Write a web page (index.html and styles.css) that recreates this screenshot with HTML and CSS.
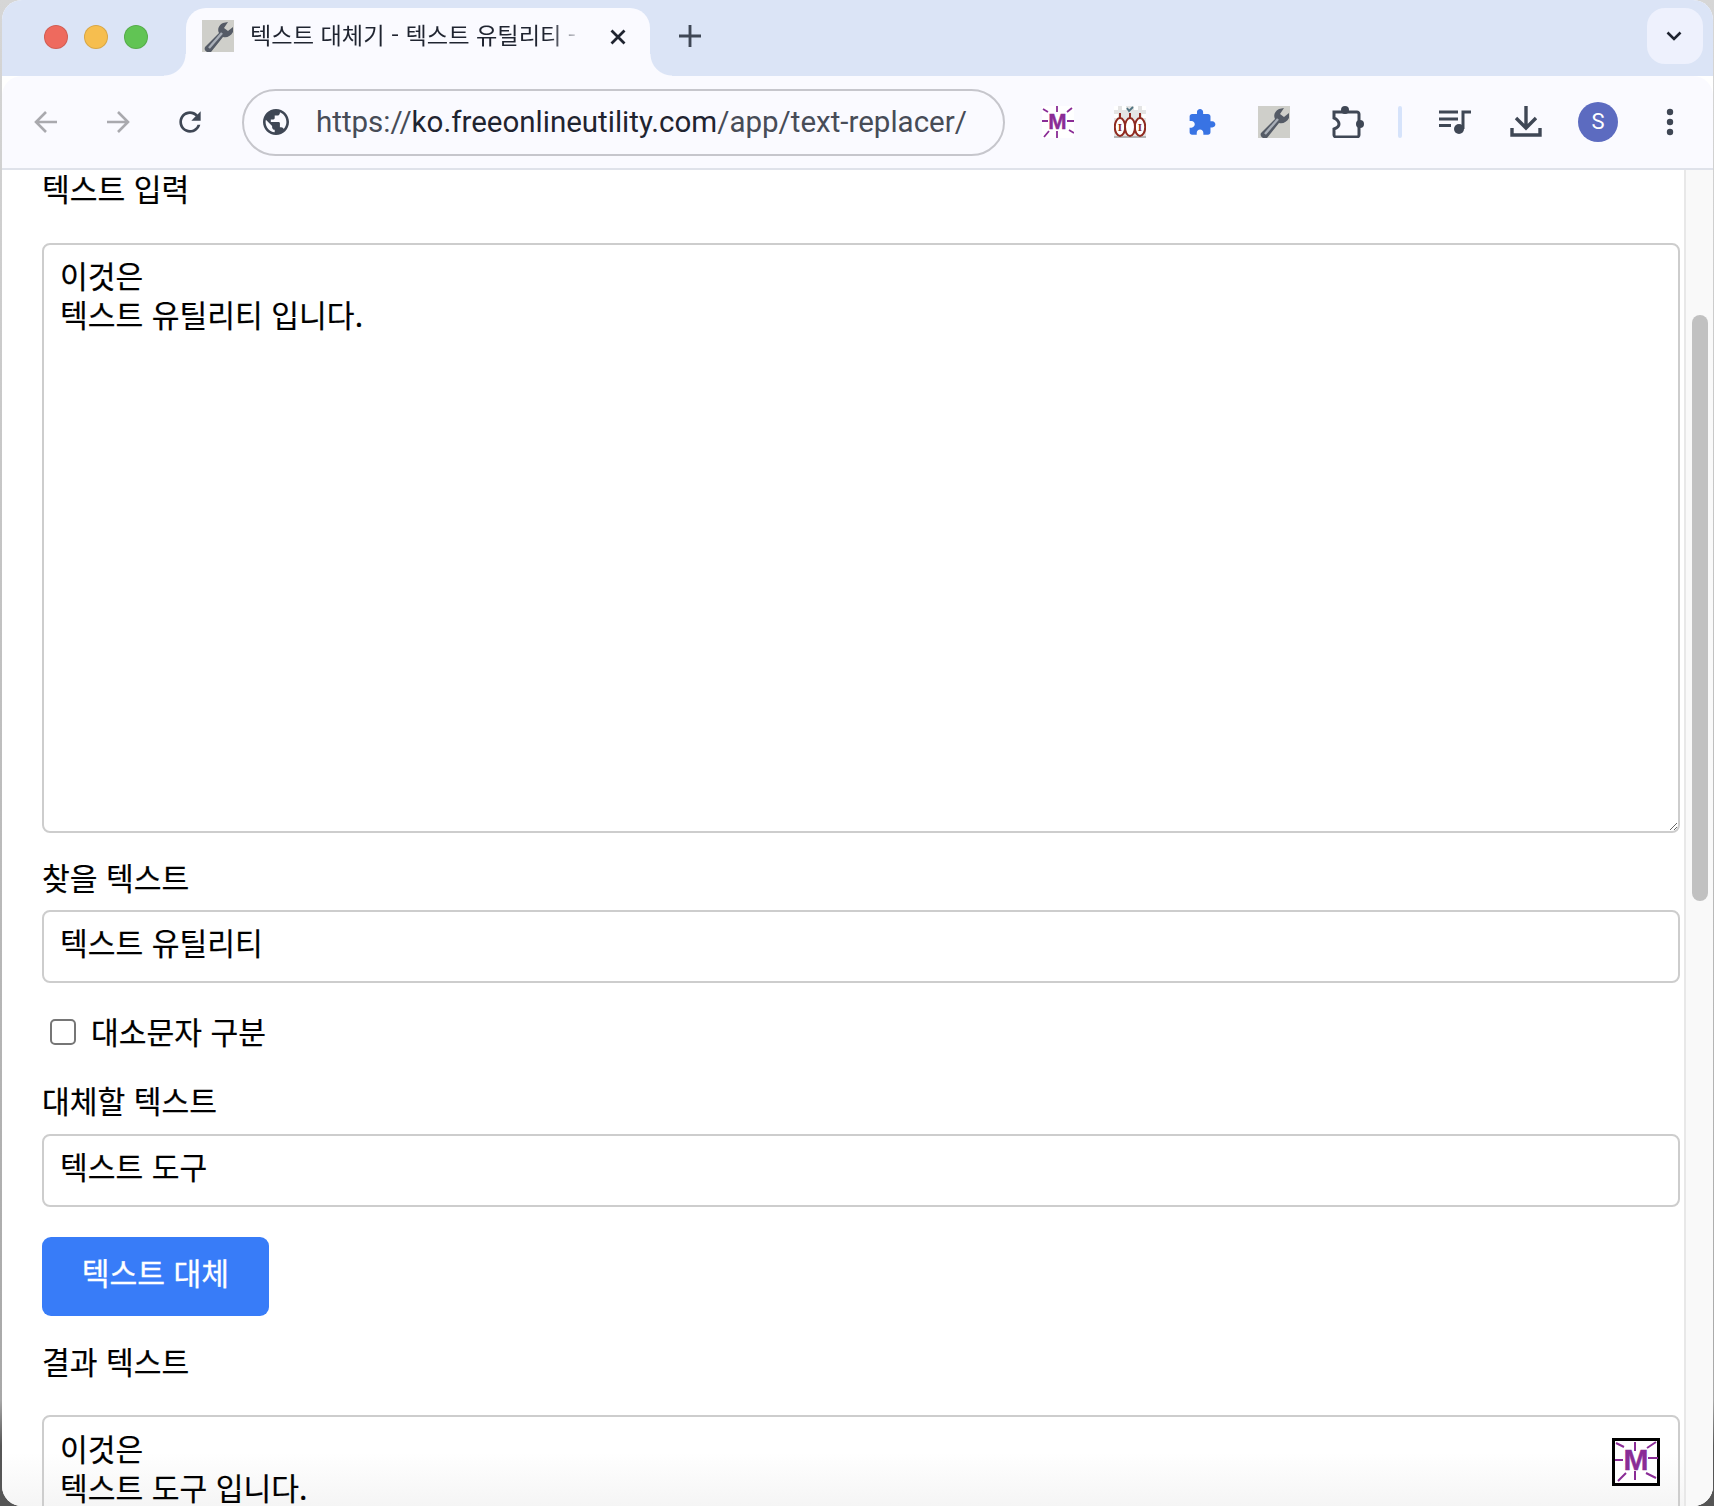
FILE: index.html
```html
<!DOCTYPE html>
<html lang="ko">
<head>
<meta charset="utf-8">
<title>텍스트 대체기</title>
<link rel="stylesheet" href="styles.css">
</head>
<body>
<div class="window">
  <header class="tabstrip">
    <div class="lights"><span class="light red"></span><span class="light amber"></span><span class="light green"></span></div>
    <div class="tab">
      <svg class="favicon" viewBox="0 0 32 32"><rect width="32" height="32" fill="#cfcfca"/><path d="M21 3C17 5 15 9 17 13L3 27C2 29 3 31 5 32H9L21 17C25 18 29 16 31 12V7L26 11 22 8 26 2z" fill="#555b66"/><path d="M7 28 20 13" stroke="#a9afb8" stroke-width="2.400"/></svg>
      <span class="tab-title">텍스트 대체기 - 텍스트 유틸리티 - 무료 온라인</span>
      <svg class="tab-close" viewBox="0 0 16 16"><path d="M1.500 1.500l13 13M14.500 1.500l-13 13" stroke="#1f2430" stroke-width="2.800" fill="none"/></svg>
    </div>
    <svg class="newtab" viewBox="0 0 20 20"><path d="M10 0v20M0 10h20" stroke="#3f4755" stroke-width="2.600"/></svg>
    <div class="tab-menu"><svg class="chev" viewBox="0 0 16 10"><path d="M1.500 1.500 8 8l6.500-6.500" stroke="#1f2430" stroke-width="2.600" fill="none"/></svg></div>
  </header>
  <nav class="toolbar">
    <span class="slot"><svg class="ico24" viewBox="0 0 24 24"><path d="M23 12H2M12 2 2 12l10 10" stroke="#a9a9ae" stroke-width="2.600" fill="none"/></svg></span>
    <span class="slot"><svg class="ico24" viewBox="0 0 24 24"><path d="M1 12h21M12 2l10 10-10 10" stroke="#a9a9ae" stroke-width="2.600" fill="none"/></svg></span>
    <span class="slot"><svg class="ico32" viewBox="0 0 24 24"><path fill="#3f4755" d="M17.650 6.350C16.200 4.900 14.210 4 12 4c-4.420 0-7.990 3.580-7.990 8s3.570 8 7.990 8c3.730 0 6.840-2.550 7.730-6h-2.080c-.82 2.330-3.040 4-5.650 4-3.310 0-6-2.690-6-6s2.690-6 6-6c1.660 0 3.140.69 4.220 1.780L13 11h7V4l-2.350 2.350z"/></svg></span>
    <div class="omnibox">
      <svg class="globe" viewBox="2 2 20 20"><path fill="#3f4755" d="M12 2C6.480 2 2 6.480 2 12s4.480 10 10 10 10-4.480 10-10S17.520 2 12 2zm-1 17.930c-3.950-.49-7-3.850-7-7.930 0-.62.08-1.210.21-1.790L9 15v1c0 1.100.9 2 2 2v1.930zm6.900-2.540c-.26-.81-1-1.390-1.900-1.390h-1v-3c0-.55-.45-1-1-1H8v-2h2c.55 0 1-.45 1-1V7h2c1.100 0 2-.9 2-2v-.41c2.930 1.190 5 4.060 5 7.410 0 2.080-.8 3.970-2.100 5.390z"/></svg>
      <span class="url"><span class="url-scheme">https://</span>ko.freeonlineutility.com<span class="url-path">/app/text-replacer/</span></span>
    </div>
    <div class="actions">
      <span class="slot"><svg class="ico32" viewBox="0 0 32 32"><rect width="32" height="32" fill="#fff"/><g stroke="#8a2c96" stroke-width="1.800" fill="none"><path d="M15 0v6M15 25v7M0 15h6M25 15h7M1 3l5 3M30 2l-5 4M27 24l5 3M2 31l5-6"/></g><text class="logo-m" x="15.500" y="23" text-anchor="middle">M</text></svg></span>
      <span class="slot"><svg class="ico32" viewBox="0 0 32 32"><rect width="32" height="32" fill="#e4e4e4"/><path d="M0 0h4v4H0zM8 0h4v4H8zM20 0h4v4h-4zM28 0h4v4h-4zM0 8h4v4H0zM28 8h4v4h-4z" fill="#fff"/><path d="M13 2l2 3 4-4" stroke="#4f7381" stroke-width="1.800" fill="none"/><rect y="30" width="32" height="2" fill="#b5b5b5"/><g fill="#fff" stroke="#8f2a20" stroke-width="2"><ellipse cx="6" cy="21" rx="5.200" ry="9"/><ellipse cx="26" cy="21" rx="5.200" ry="9"/><ellipse cx="16" cy="21" rx="5" ry="9"/></g><path d="M6 7v5M16 7v5M26 7v5" stroke="#8f2a20" stroke-width="2"/><text class="logo-i" x="6" y="25" text-anchor="middle">I</text><text class="logo-i" x="26" y="25" text-anchor="middle">I</text></svg></span>
      <span class="slot"><svg class="ico-puzzle" viewBox="1 1 23 22"><path fill="#3873e4" d="M20.500 11H19V7c0-1.100-.9-2-2-2h-4V3.500C13 2.120 11.880 1 10.500 1S8 2.120 8 3.500V5H4c-1.100 0-1.990.9-1.990 2v3.800H3.500c1.490 0 2.700 1.210 2.700 2.700s-1.210 2.700-2.700 2.700H2V20c0 1.100.9 2 2 2h3.800v-1.500c0-1.490 1.210-2.700 2.700-2.700 1.490 0 2.700 1.210 2.700 2.700V22H17c1.100 0 2-.9 2-2v-4h1.500c1.380 0 2.500-1.120 2.500-2.500S21.880 11 20.500 11z"/></svg></span>
      <span class="slot"><svg class="ico32" viewBox="0 0 32 32"><rect width="32" height="32" fill="#cfcfca"/><path d="M21 3C17 5 15 9 17 13L3 27C2 29 3 31 5 32H9L21 17C25 18 29 16 31 12V7L26 11 22 8 26 2z" fill="#555b66"/><path d="M7 28 20 13" stroke="#a9afb8" stroke-width="2.400"/></svg></span>
      <span class="slot ext-slot"><svg class="ico32" viewBox="0 0 32 32"><path d="M2 6h23c1 0 2 1 2 2v21c0 1-1 2-2 2H4c-1 0-2-1-2-2v-6c3-1 5-3 5-5s-2-5-5-6z" fill="none" stroke="#3f4755" stroke-width="3"/><circle cx="13" cy="4" r="4" fill="#3f4755"/><circle cx="28" cy="18" r="4" fill="#3f4755"/></svg></span>
      <span class="divider"></span>
      <span class="slot queue-slot"><svg class="ico32" viewBox="0 0 32 24"><path d="M0 2h19M0 9h19M0 15.500h12M24 19V2h8" stroke="#3f4755" stroke-width="3" fill="none"/><circle cx="20" cy="19" r="5" fill="#3f4755"/></svg></span>
      <span class="slot"><svg class="ico32" viewBox="0 0 32 32"><path d="M16 0v21M6 12l10 10 10-10M2 22v7h28v-7" stroke="#3f4755" stroke-width="3.400" fill="none"/></svg></span>
      <span class="slot"><span class="avatar">S</span></span>
      <span class="slot"><svg class="ico-dots" viewBox="0 0 8 28"><circle cx="4" cy="4" r="3.200"/><circle cx="4" cy="14" r="3.200"/><circle cx="4" cy="24" r="3.200"/></svg></span>
    </div>
  </nav>
  <div class="viewport">
    <main class="page">
      <label class="label first">텍스트 입력</label>
      <textarea class="field area">이것은
텍스트 유틸리티 입니다.</textarea>
      <label class="label find">찾을 텍스트</label>
      <input class="field line find-input" type="text" value="텍스트 유틸리티">
      <label class="check"><input class="box" type="checkbox"><span class="check-text">대소문자 구분</span></label>
      <label class="label repl">대체할 텍스트</label>
      <input class="field line repl-input" type="text" value="텍스트 도구">
      <button class="btn" type="button">텍스트 대체</button>
      <label class="label result">결과 텍스트</label>
      <div class="result-wrap">
        <textarea class="field out">이것은
텍스트 도구 입니다.</textarea>
        <svg class="badge" viewBox="0 0 48 48"><rect x="1.500" y="1.500" width="45" height="45" fill="#fff" stroke="#000" stroke-width="3"/><g stroke="#8a2c96" stroke-width="2" fill="none"><path d="M23 4v9M23 33v9M3 22h8M36 20h10M4 5l8 4M44 4l-9 6M34 35l10 5M6 43l8-8"/></g><text class="logo-mb" x="24" y="32" text-anchor="middle">M</text></svg>
      </div>
    </main>
    <aside class="scrollbar"><div class="thumb"></div></aside>
  </div>
</div>
</body>
</html>
```
FILE: styles.css
```css
* { box-sizing: border-box; }
html, body { margin: 0; height: 1506px; overflow: hidden; }
body {
  background: linear-gradient(#d6d6d6 0, #b9b9b9 60%, #a8a8a8 93%, #555 96%, #555 100%);
  font-family: "Noto Sans CJK KR", "Liberation Sans", sans-serif;
}
.window {
  margin: 0 1px 0 2px;
  height: 1506px;
  border-radius: 20px;
  overflow: hidden;
  display: flex;
  flex-direction: column;
  background: #fff;
}
.tabstrip {
  height: 76px;
  flex: none;
  background: #dbe4f6;
  display: flex;
  align-items: flex-start;
}
.lights { display: flex; gap: 16px; margin: 25px 0 0 42px; width: 142px; }
.light { width: 24px; height: 24px; border-radius: 50%; border: 1px solid rgba(0,0,0,.12); }
.red { background: #ee6a5e; }
.amber { background: #f6be4f; }
.green { background: #61c454; }
.tab {
  position: relative;
  margin-top: 8px;
  width: 464px;
  height: 68px;
  background: #fafaff;
  border-radius: 20px 20px 0 0;
  display: flex;
  align-items: flex-start;
  padding: 12px 0 0 16px;
}
.tab::before, .tab::after {
  content: "";
  position: absolute;
  bottom: 0;
  width: 22px;
  height: 22px;
}
.tab::before { left: -22px; background: radial-gradient(circle at 0 0, #dbe4f6 21px, #fafaff 22px); }
.tab::after { right: -22px; background: radial-gradient(circle at 100% 0, #dbe4f6 21px, #fafaff 22px); }
.favicon { width: 32px; height: 32px; flex: none; }
.tab-title {
  margin-left: 16px;
  width: 333px;
  height: 32px;
  overflow: hidden;
  white-space: nowrap;
  font-size: 23.200px;
  line-height: 28px;
  color: #1f2430;
  -webkit-mask-image: linear-gradient(90deg, #000 300px, transparent 333px);
  mask-image: linear-gradient(90deg, #000 300px, transparent 333px);
}
.tab-close { width: 16px; height: 16px; margin: 9px 0 0 27px; flex: none; }
.newtab { width: 22px; height: 22px; margin: 25px 0 0 29px; flex: none; }
.tab-menu {
  margin: 8px 10px 0 auto;
  width: 56px;
  height: 56px;
  border-radius: 18px;
  background: #eef1fd;
  display: flex;
  align-items: center;
  justify-content: center;
  padding-right: 3px;
}
.chev { width: 16px; height: 10px; }
.toolbar {
  height: 94px;
  flex: none;
  background: #fafaff;
  border-bottom: 2px solid #dfe2ea;
  border-radius: 20px 20px 0 0;
  display: flex;
  align-items: center;
  padding: 0 8px 0 8px;
  position: relative;
}
.slot { width: 72px; height: 60px; flex: none; display: flex; align-items: center; justify-content: center; }
.ext-slot { padding-left: 3px; }
.queue-slot { padding-left: 2px; }
.ico24 { width: 24px; height: 24px; }
.ico32 { width: 32px; height: 32px; }
.ico-puzzle { width: 29px; height: 27px; }
.ico-dots { width: 8px; height: 28px; fill: #3f4755; }
.omnibox {
  width: 763px;
  height: 67px;
  margin-left: 16px;
  flex: none;
  border: 2px solid #c6c6cc;
  border-radius: 34px;
  display: flex;
  align-items: center;
  padding-left: 19px;
}
.globe { width: 26px; height: 26px; flex: none; }
.url {
  margin-left: 27px;
  font-family: Roboto, "Liberation Sans", sans-serif;
  font-size: 29.500px;
  line-height: 36px;
  white-space: nowrap;
  color: #1f2430;
}
.url-scheme, .url-path { color: #474c57; }
.actions { display: flex; align-items: center; margin-left: 17px; }
.divider { width: 4px; height: 32px; margin: 0 16px 0 16px; border-radius: 2px; background: #d6e3fb; flex: none; }
.avatar {
  width: 40px;
  height: 40px;
  border-radius: 50%;
  background: #5c6bc0;
  color: #fff;
  font-family: Roboto, sans-serif;
  font-size: 22px;
  line-height: 40px;
  text-align: center;
}
.logo-m { font-family: "Liberation Sans", sans-serif; font-weight: 700; font-size: 22px; fill: #8a2c96; stroke: #8a2c96; stroke-width: .4px; }
.logo-mb { font-family: "Liberation Sans", sans-serif; font-weight: 700; font-size: 30px; fill: #8a2c96; stroke: #8a2c96; stroke-width: .4px; }
.logo-i { font-family: "Liberation Serif", serif; font-weight: 700; font-size: 11px; fill: #8f2a20; }
.viewport {
  flex: 1;
  min-height: 0;
  display: flex;
  background: linear-gradient(#fff 96%, #f5f5f5 100%);
}
.page {
  width: 1682px;
  flex: none;
  padding: 0 4px 0 40px;
  display: flex;
  flex-direction: column;
  align-items: flex-start;
}
.page > * { flex: none; }
.label { display: block; font-size: 30.200px; line-height: 40px; color: #000; height: 40px; -webkit-text-stroke: .2px #000; }
.first { margin-bottom: 35px; margin-top: -2px; }
.find { margin: 24px 0 13px; }
.repl { margin: 27px 0 14px; }
.result { margin: 25px 0 34px; }
.field {
  display: block;
  width: 100%;
  font: 30.200px/39px "Noto Sans CJK KR", "Liberation Sans", sans-serif;
  color: #000;
  background: transparent;
  border: 2px solid #cdcdcd;
  border-radius: 8px;
  padding: 12px 16px;
  margin: 0;
  outline: none;
  -webkit-text-stroke: .2px #000;
}
.area { height: 590px; resize: both; padding-top: 11px; }
.line { height: 73px; padding: 0 16px 9px; }
.check { display: flex; align-items: center; height: 40px; margin-top: 30px; font-size: 30.200px; line-height: 40px; color: #000; -webkit-text-stroke: .2px #000; }
.check-text { padding-bottom: 4px; }
.box {
  appearance: none;
  width: 26px;
  height: 26px;
  margin: 0 15px 2px 8px;
  background: #fff;
  border: 2px solid #767676;
  border-radius: 5px;
}
.btn {
  margin-top: 30px;
  width: 227px;
  height: 79px;
  border: 0;
  border-radius: 9px;
  background: #387cf8;
  color: #fff;
  font: 30.200px/40px "Noto Sans CJK KR", sans-serif;
  padding: 0 0 10px;
  -webkit-text-stroke: .3px #fff;
}
.result-wrap { position: relative; width: 100%; }
.out { height: 200px; resize: none; overflow: hidden; padding-top: 12px; }
.badge { position: absolute; top: 23px; right: 20px; width: 48px; height: 48px; }
.scrollbar {
  width: 29px;
  flex: none;
  background: #f9f9f9;
  border-left: 2px solid #e8e8e8;
  padding: 145px 0 0 6px;
}
.thumb { width: 16px; height: 586px; border-radius: 8px; background: #c1c1c1; }
```
